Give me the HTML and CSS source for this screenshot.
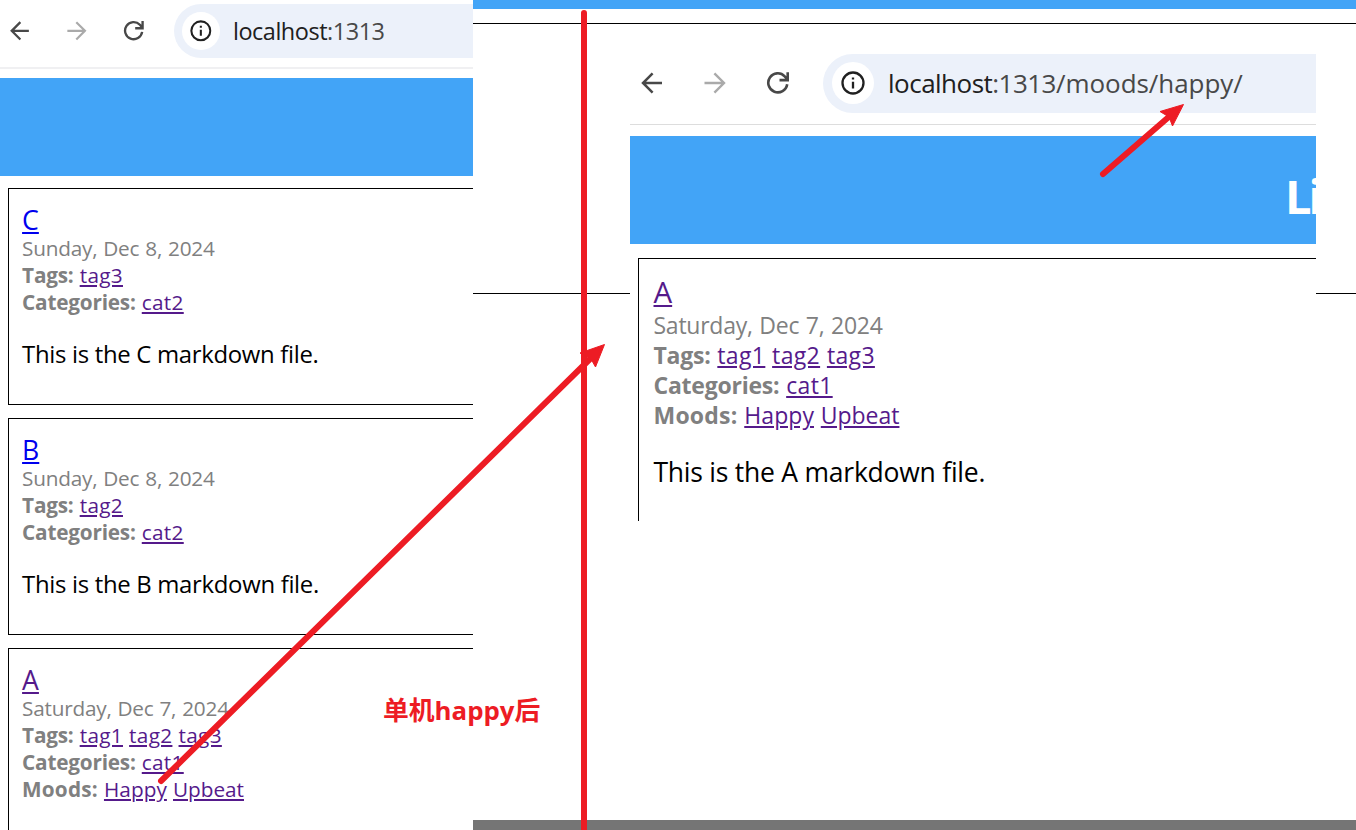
FILE: index.html
```html
<!DOCTYPE html>
<html lang="zh">
<head>
<meta charset="utf-8">
<title>Moods</title>
<link rel="stylesheet" href="styles.css">
</head>
<body>
<svg class="defs" width="0" height="0" aria-hidden="true">
  <symbol id="back" viewBox="0 0 24 24"><path d="M12.6 2.4 3 12l9.600 9.600M3 12h19" fill="none" stroke="currentColor" stroke-width="2.5"/></symbol>
  <symbol id="forward" viewBox="0 0 24 24"><path d="M11.400 2.400 21 12l-9.600 9.600M21 12H1.500" fill="none" stroke="currentColor" stroke-width="2.400"/></symbol>
  <symbol id="reload" viewBox="0 0 24 24"><path d="M21.200 13.200A9.500 9.500 0 1 1 18.700 5.300L21.500 8.500M21.700 1.200V9.100H13.500" fill="none" stroke="currentColor" stroke-width="2.600"/></symbol>
  <symbol id="info" viewBox="0 0 24 24"><circle cx="12" cy="12" r="10.500" fill="none" stroke="currentColor" stroke-width="2.300"/><path d="M12 10.700v6.700M12 6.400v2.200" fill="none" stroke="currentColor" stroke-width="2.300"/></symbol>
</svg>
<main class="canvas">
  <section class="panel home">
    <div class="toolbar">
      <svg class="icon back"><use href="#back"/></svg>
      <svg class="icon forward"><use href="#forward"/></svg>
      <svg class="icon reload"><use href="#reload"/></svg>
      <div class="address"><span class="badge"><svg class="icon"><use href="#info"/></svg></span><span class="url"><b>localhost</b>:1313</span></div>
    </div>
    <div class="banner"></div>
    <article class="card">
      <div class="title"><a class="new">C</a></div>
      <div class="meta date">Sunday, Dec 8, 2024</div>
      <div class="meta"><b>Tags:</b> <a>tag3</a></div>
      <div class="meta"><b>Categories:</b> <a>cat2</a></div>
      <p class="text">This is the C markdown file.</p>
    </article>
    <article class="card">
      <div class="title"><a class="new">B</a></div>
      <div class="meta date">Sunday, Dec 8, 2024</div>
      <div class="meta"><b>Tags:</b> <a>tag2</a></div>
      <div class="meta"><b>Categories:</b> <a>cat2</a></div>
      <p class="text">This is the B markdown file.</p>
    </article>
    <article class="card">
      <div class="title"><a>A</a></div>
      <div class="meta date">Saturday, Dec 7, 2024</div>
      <div class="meta"><b>Tags:</b> <a>tag1</a> <a>tag2</a> <a>tag3</a></div>
      <div class="meta"><b>Categories:</b> <a>cat1</a></div>
      <div class="meta moods"><b>Moods:</b> <a>Happy</a> <a>Upbeat</a></div>
    </article>
  </section>
  <section class="backdrop">
    <div class="strip"></div>
    <div class="outline"></div>
    <div class="footer"></div>
  </section>
  <section class="panel mood">
    <div class="toolbar">
      <svg class="icon back"><use href="#back"/></svg>
      <svg class="icon forward"><use href="#forward"/></svg>
      <svg class="icon reload"><use href="#reload"/></svg>
      <div class="address"><span class="badge"><svg class="icon"><use href="#info"/></svg></span><span class="url"><b>localhost</b>:1313<span class="path">/moods/happy/</span></span></div>
    </div>
    <div class="banner"><h1>Li</h1></div>
    <article class="card">
      <div class="title"><a>A</a></div>
      <div class="meta date">Saturday, Dec 7, 2024</div>
      <div class="meta"><b>Tags:</b> <a>tag1</a> <a>tag2</a> <a>tag3</a></div>
      <div class="meta"><b>Categories:</b> <a>cat1</a></div>
      <div class="meta moods"><b>Moods:</b> <a>Happy</a> <a>Upbeat</a></div>
      <p class="text">This is the A markdown file.</p>
    </article>
  </section>
  <svg class="marks" viewBox="0 0 1356 830">
    <path class="line" d="M584 13V840M161 781 590 359M1103 174 1171 115"/>
    <path class="head" d="M604.500 344.500 595.500 367 591 359 580 353ZM1183.500 104.500 1172.500 126 1169 117 1160 111.500Z"/>
  </svg>
  <div class="note">单机<span>happy</span>后</div>
</main>
</body>
</html>
```
FILE: styles.css
```css
* { box-sizing: border-box; }
body { margin: 0; background: #fff; font-family: "Open Sans", "Noto Sans CJK SC", sans-serif; }
.defs { position: absolute; }
.canvas { position: relative; display: flex; width: 1356px; height: 830px; overflow: hidden; }
.panel { overflow: hidden; background: #fff; }
.home { flex: none; width: 473px; height: 830px; font-size: 9.03px; }
.mood { position: absolute; left: 630px; top: 48px; width: 686px; height: 473px; font-size: 10px; }

/* Browser toolbar */
.toolbar { display: flex; align-items: center; height: 7.7em; padding: 0 0 6px 1em; border-bottom: 1px solid #ddd; }
.home .toolbar { height: 69px; padding: 0 0 5px 9px; border-bottom: 2px solid #f0f0f2; }
.toolbar > .icon { flex: none; }
.icon { width: 2.4em; height: 2.4em; color: #484848; }
.forward { margin-left: 3.9em; color: #aaa; }
.reload { margin-left: 3.9em; }
.address { display: flex; flex: none; align-items: center; width: 80em; height: 5.9em; margin-left: 3.3em; padding-left: .9em; border-radius: 3em; background: #ecf1fa; }
.badge { display: flex; align-items: center; justify-content: center; width: 4.2em; height: 4.2em; border-radius: 50%; background: #fff; }
.badge .icon { color: #202020; }
.url { margin-left: .54em; font-size: 2.6em; letter-spacing: -.02em; color: #484848; white-space: nowrap; }
.url b { font-weight: 400; color: #202020; }
.path { letter-spacing: -.002em; }

.banner { height: 10.8em; margin-top: 11px; background: #42a4f7; overflow: hidden; }
.home .banner { height: 97.500px; margin-top: 9px; }
.banner h1 { margin: 0 0 0 655px; font-size: 47px; line-height: 121px; letter-spacing: -3px; color: #fff; white-space: nowrap; }

/* Post cards */
.card { width: 100em; height: 40em; margin: 1.4em 0 0 8px; padding: 1.5em 1.45em 0; border: 1px solid #000; }
.home .card { height: 217px; margin-top: 13px; padding-top: 14.5px; }
.home .banner + .card { margin-top: 12.5px; }
.title { height: 3.63em; }
.home .title { height: 31.5px; }
.title a { font-size: 2.95em; line-height: 1.25; }
.meta { height: 1.3043em; font-size: 2.3em; line-height: 1.3043; letter-spacing: -.005em; word-spacing: .04em; color: gray; white-space: nowrap; }
.date { letter-spacing: -.011em; }
.meta b { letter-spacing: -.01em; }
.meta a { letter-spacing: .015em; }
.moods b { letter-spacing: .009em; }
.moods a { letter-spacing: .003em; }
a { color: #551a8b; text-decoration: underline; }
.moods a:last-child { letter-spacing: -.001em; }
.new { color: #00e; }
.text { margin: .91em 0 0; font-size: 2.65em; line-height: 1.36; letter-spacing: -.009em; color: #000; }
.home .text { letter-spacing: -.013em; }

/* Page visible behind the panels */
.backdrop { flex: 1; display: flex; flex-direction: column; }
.strip { height: 9px; background: #42a4f7; }
.outline { height: 271px; margin-top: 14px; border: solid #000; border-width: 1px 0; }
.footer { height: 10px; margin-top: auto; background: #757575; }

/* Annotations */
.marks { position: absolute; inset: 0; width: 1356px; height: 830px; }
.line { fill: none; stroke: #ed1c24; stroke-width: 6; stroke-linecap: round; }
.head { fill: #ed1c24; stroke: #ed1c24; stroke-width: 1; }
.note { position: absolute; left: 383px; top: 691px; font-size: 25.8px; line-height: 38px; font-weight: 700; color: #ed1c24; white-space: nowrap; }
```
